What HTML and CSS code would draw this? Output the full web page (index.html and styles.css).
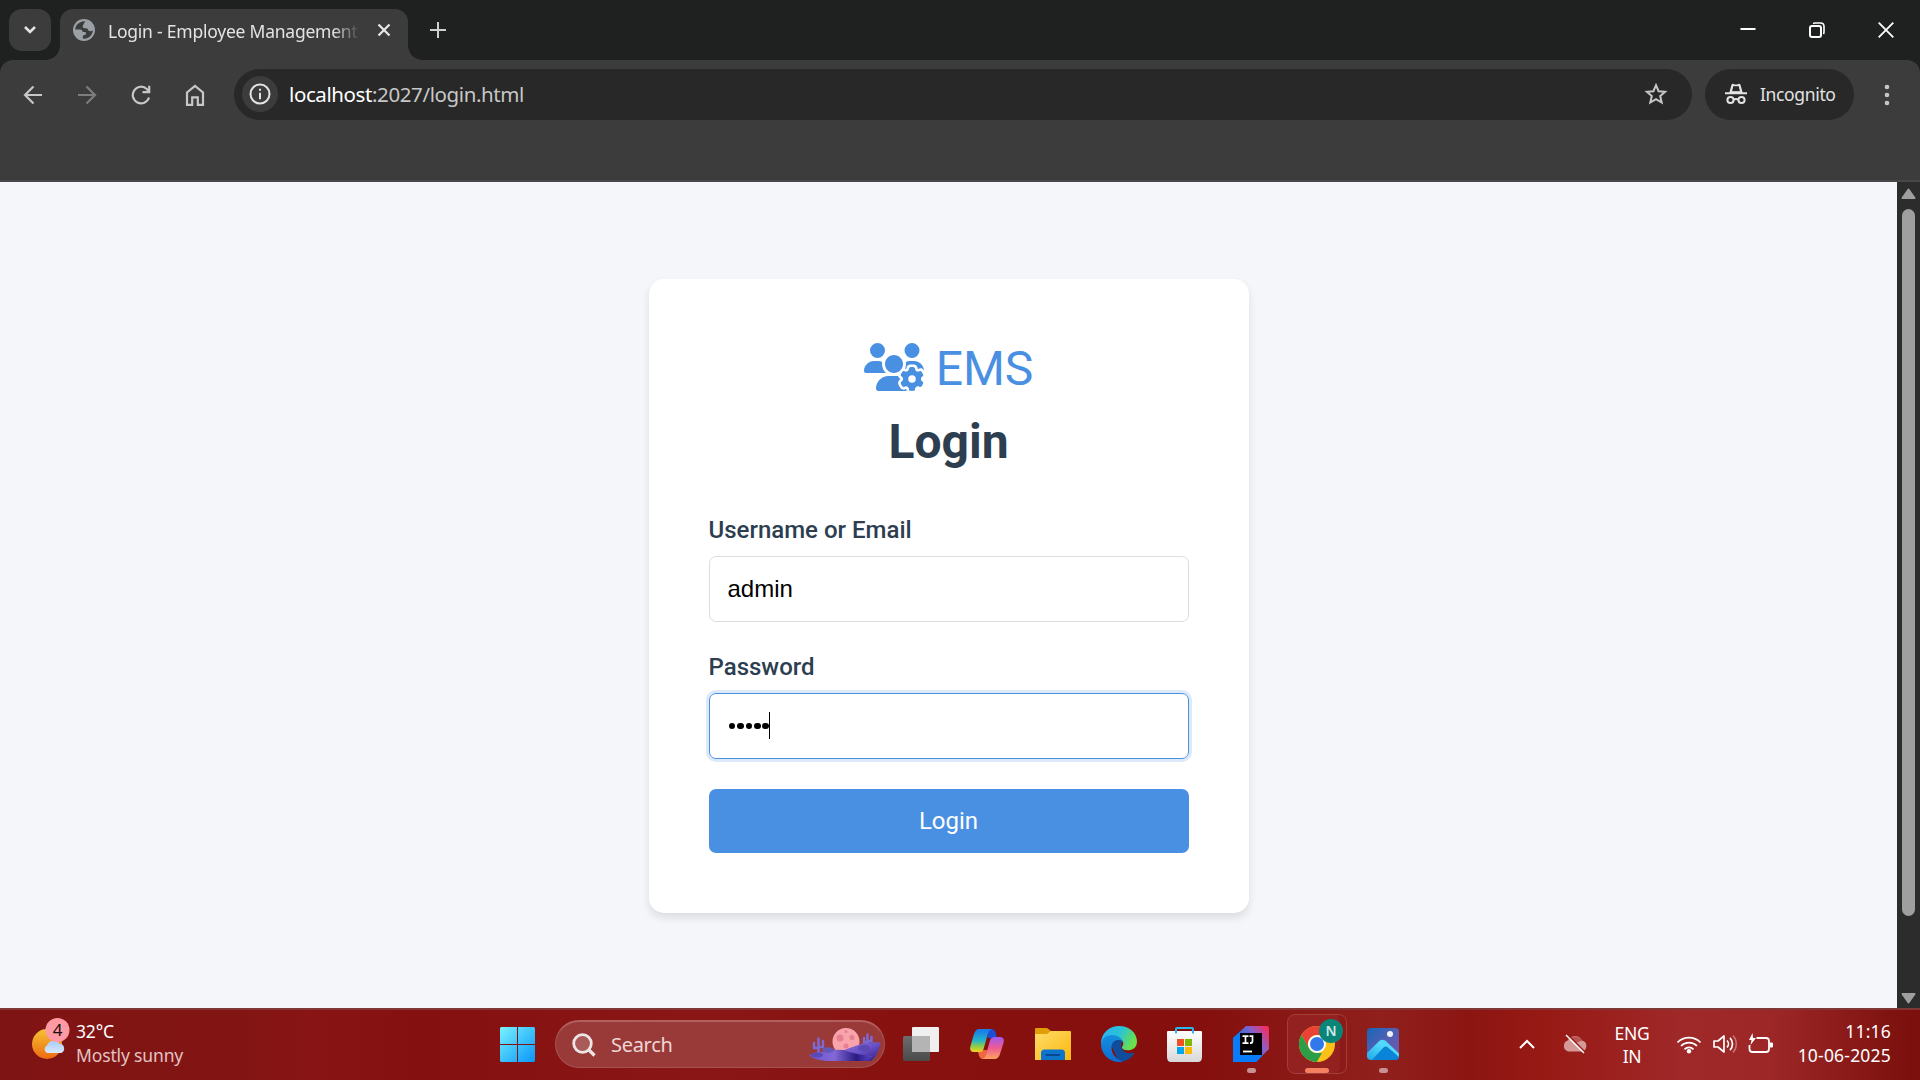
FILE: index.html
```html
<!DOCTYPE html>
<html lang="en">
<head>
<meta charset="utf-8">
<title>Login - Employee Management System</title>
<link rel="stylesheet" href="styles.css">
</head>
<body>
<div class="screen">
  <header class="tabstrip">
    <button class="tab-search" aria-label="Search tabs"><svg width="14" height="10" viewBox="0 0 14 10"><path d="M2 2l5 5 5-5" fill="none" stroke="#e3e3e3" stroke-width="2.6"/></svg></button>
    <div class="tab">
      <svg class="favicon" width="22" height="22" viewBox="0 0 22 22"><circle cx="11" cy="11" r="11" fill="#9aa0a6"/><path d="M12 2.2C7 1.800 2.500 5.500 2.200 10.500h4.800c1.800 0 2.600 1 2.800 2.500h3v2.800c-1.500 0-3 .4-3 2v1.800c5 1 9.800-3 10-8.300-1 .8-2.300 1.200-3.500.8-1.500-.5-1.300-2-2.300-2.600-1-.6-3.500.2-4.200-1.300-.6-1.500 1-2.700 1-3.500 0-1 1.200-1 1.200-2.500z" fill="#3c3c3c"/></svg>
      <span class="tab-title">Login - Employee Management</span>
      <svg class="tab-close" width="14" height="14" viewBox="0 0 14 14"><path d="M1.500 1.500l11 11M12.500 1.500l-11 11" stroke="#e8e8e8" stroke-width="2.200"/></svg>
    </div>
    <svg class="new-tab" width="16" height="16" viewBox="0 0 16 16"><path d="M8 0v16M0 8h16" stroke="#d0d0d0" stroke-width="2"/></svg>
    <div class="window-controls">
      <svg width="16" height="16" viewBox="0 0 16 16"><path d="M0.500 7h15" stroke="#fff" stroke-width="2"/></svg>
      <svg width="16" height="16" viewBox="0 0 16 16"><rect x="1" y="4" width="11" height="11" rx="2" fill="none" stroke="#fff" stroke-width="2"/><path d="M4 1.500Q5 1 6 1h5.500Q15 1 15 4.500V10q0 1-.6 2" fill="none" stroke="#fff" stroke-width="1.600"/></svg>
      <svg width="16" height="16" viewBox="0 0 16 16"><path d="M.7.700l14.600 14.600M15.300.7L.7 15.300" stroke="#fff" stroke-width="1.800"/></svg>
    </div>
  </header>

  <nav class="toolbar">
    <div class="nav-icons">
      <svg width="20" height="20" viewBox="0 0 20 20"><path d="M10.500 1.500L2 10l8.500 8.500M2 10h17" fill="none" stroke="#c7c7c7" stroke-width="2.200"/></svg>
      <svg width="20" height="20" viewBox="0 0 20 20"><path d="M9.500 1.500L18 10l-8.500 8.500M18 10H1" fill="none" stroke="#7d7d7d" stroke-width="2.200"/></svg>
      <svg width="20" height="20" viewBox="0 0 20 20"><path d="M18 12.500A8.300 8.300 0 1 1 15.800 4l2.200 2.600" fill="none" stroke="#c7c7c7" stroke-width="2.200"/><path d="M18.200.8V7.200H11.500" fill="none" stroke="#c7c7c7" stroke-width="2.200"/></svg>
      <svg width="20" height="22" viewBox="0 0 20 22"><path d="M2 20.800V8.500L10 2l8 6.500v12.300h-5.200v-7.500H7.200v7.500z" fill="none" stroke="#c7c7c7" stroke-width="2.200"/></svg>
    </div>
    <div class="omnibox">
      <span class="site-info"><svg width="22" height="22" viewBox="0 0 22 22"><circle cx="11" cy="11" r="9.500" fill="none" stroke="#e3e3e3" stroke-width="2"/><path d="M11 9.800v6.400M11 5.700v2.100" stroke="#e3e3e3" stroke-width="2"/></svg></span>
      <span class="url"><b>localhost</b>:2027/login.html</span>
      <svg class="star" width="24" height="24" viewBox="0 0 24 24"><path d="M12 3.200l2.600 6 6.500.6-4.900 4.300 1.500 6.400-5.700-3.400-5.700 3.400 1.500-6.400-4.900-4.300 6.500-.6z" fill="none" stroke="#c7c7c7" stroke-width="2"/></svg>
    </div>
    <div class="incognito">
      <svg width="22" height="22" viewBox="0 0 22 22"><path d="M0 9.300h22v2H0zM4.300 9.800L6.500 1.700Q7.200.300 8.600.9q2.400 1.100 4.800 0 1.400-.6 2.100.8l2.200 8.100z" fill="#e3e3e3"/><path d="M7 8.500l1.400-5.600q2.600.9 5.200 0L15 8.500z" fill="#282828"/><path d="M6 8.300h10v1.500H6z" fill="#e3e3e3"/><g fill="none" stroke="#e3e3e3" stroke-width="2"><circle cx="5.500" cy="17" r="3.100"/><circle cx="16.500" cy="17" r="3.100"/><path d="M8.500 16.500q2.500-1.200 5 0"/></g></svg>
      <span>Incognito</span>
    </div>
    <svg class="menu" width="6" height="22" viewBox="0 0 6 22"><g fill="#c7c7c7"><circle cx="3" cy="3" r="2.300"/><circle cx="3" cy="11" r="2.300"/><circle cx="3" cy="19" r="2.300"/></g></svg>
  </nav>

  <div class="viewport">
    <main class="page">
      <section class="card">
        <div class="logo">
          <svg width="60" height="48" viewBox="0 0 640 512" fill="#4a90e2"><path d="M144 160A80 80 0 1 0 144 0a80 80 0 1 0 0 160zm368 0A80 80 0 1 0 512 0a80 80 0 1 0 0 160zM0 298.700C0 310.400 9.600 320 21.300 320H234.700c.2 0 .4 0 .7 0c-26.600-23.500-43.300-57.800-43.300-96c0-7.600 .7-15 1.900-22.300c-13.600-6.300-28.700-9.700-44.600-9.700H106.700C47.800 192 0 239.800 0 298.700zM320 320c24 0 45.900-8.800 62.700-23.300c2.500-3.700 5.200-7.300 8-10.700c2.700-3.300 5.700-6.100 9-8.300C410 262.300 416 243.900 416 224c0-53-43-96-96-96s-96 43-96 96s43 96 96 96zm65.400 60.200c-10.300-5.900-18.100-16.200-20.800-28.200H261.300C187.700 352 128 411.700 128 485.300c0 14.700 11.900 26.700 26.700 26.700H455.200c-2.100-5.200-3.200-10.900-3.200-16.400v-3c-1.300-.7-2.700-1.500-4-2.300l-2.600 1.500c-16.800 9.700-40.500 8-54.700-9.700c-4.500-5.600-8.600-11.500-12.400-17.600l-.1-.2-.1-.2-2.400-4.100-.1-.2-.1-.2c-3.400-6.200-6.400-12.600-9-19.300c-8.200-21.200 2.200-42.600 19-52.300l2.700-1.500c0-.8 0-1.500 0-2.300s0-1.500 0-2.300l-2.700-1.500zM533.300 192H490.700c-15.900 0-31 3.500-44.600 9.700c1.300 7.200 1.900 14.700 1.900 22.300c0 17.400-3.500 33.900-9.700 49c2.500 .9 4.900 2 7.100 3.300l2.600 1.500c1.300-.8 2.600-1.600 4-2.300v-3c0-19.400 13.300-39.100 35.800-42.600c7.900-1.200 16-1.900 24.200-1.900s16.300 .6 24.200 1.900c22.500 3.500 35.800 23.200 35.800 42.600v3c1.300 .7 2.700 1.500 4 2.300l2.600-1.500c16.800-9.700 40.500-8 54.700 9.700c2.300 2.800 4.500 5.800 6.600 8.700c-2.100-57.100-49-102.700-106.600-102.700zm91.300 163.900c6.300-3.600 9.500-11.100 6.800-18c-2.100-5.500-4.600-10.800-7.400-15.900l-2.300-4c-3.100-5.100-6.500-9.900-10.200-14.500c-4.600-5.700-12.700-6.700-19-3l-2.900 1.700c-9.200 5.300-20.400 4-29.600-1.300s-16.100-14.500-16.100-25.100v-3.400c0-7.300-4.900-13.800-12.100-14.900c-6.500-1-13.100-1.500-19.900-1.500s-13.400 .5-19.900 1.500c-7.200 1.100-12.100 7.600-12.100 14.900v3.400c0 10.600-6.900 19.800-16.100 25.100s-20.400 6.600-29.600 1.300l-2.900-1.700c-6.300-3.600-14.400-2.600-19 3c-3.700 4.600-7.100 9.500-10.200 14.600l-2.300 3.900c-2.800 5.100-5.300 10.400-7.400 15.900c-2.600 6.800 .5 14.300 6.800 17.900l2.900 1.700c9.200 5.300 13.700 15.800 13.700 26.400s-4.500 21.100-13.700 26.400l-3 1.700c-6.300 3.600-9.500 11.100-6.800 17.900c2.100 5.500 4.600 10.700 7.400 15.800l2.400 4.100c3 5.100 6.400 9.900 10.100 14.500c4.600 5.700 12.700 6.700 19 3l2.900-1.700c9.200-5.300 20.400-4 29.600 1.300s16.100 14.500 16.100 25.100v3.400c0 7.300 4.900 13.800 12.100 14.900c6.500 1 13.100 1.500 19.900 1.500s13.400-.5 19.900-1.500c7.200-1.100 12.100-7.600 12.100-14.900v-3.400c0-10.600 6.900-19.800 16.100-25.100s20.400-6.600 29.600-1.300l2.900 1.700c6.300 3.600 14.400 2.600 19-3c3.700-4.600 7.100-9.400 10.100-14.500l2.400-4.200c2.800-5.100 5.300-10.300 7.400-15.800c2.600-6.800-.5-14.300-6.800-17.900l-3-1.700c-9.200-5.300-13.700-15.800-13.700-26.400s4.500-21.100 13.700-26.400l3-1.700zM472 384a40 40 0 1 1 80 0 40 40 0 1 1 -80 0z"/></svg>
          <span>EMS</span>
        </div>
        <h1>Login</h1>
        <div class="label">Username or Email</div>
        <div class="field">admin</div>
        <div class="label">Password</div>
        <div class="field focused"><i></i><i></i><i></i><i></i><i></i><span class="caret"></span></div>
        <button class="submit">Login</button>
      </section>
    </main>
    <div class="scrollbar">
      <svg width="15" height="11" viewBox="0 0 15 11"><path d="M7.500 1.500L13.500 10h-12z" fill="#9f9f9f" stroke="#9f9f9f" stroke-width="2" stroke-linejoin="round"/></svg>
      <div class="thumb"></div>
      <svg width="15" height="11" viewBox="0 0 15 11"><path d="M7.500 9.500L1.500 1h12z" fill="#9f9f9f" stroke="#9f9f9f" stroke-width="2" stroke-linejoin="round"/></svg>
    </div>
  </div>

  <footer class="taskbar">
    <div class="weather">
      <svg width="40" height="46" viewBox="0 0 40 46">
        <defs><linearGradient id="sun" x1="0" y1="0" x2="0" y2="1"><stop offset="0" stop-color="#f3c331"/><stop offset="1" stop-color="#ef6a12"/></linearGradient><linearGradient id="cl" x1="0" y1="0" x2="0" y2="1"><stop offset="0" stop-color="#a9ccf7"/><stop offset="1" stop-color="#d8e8fd"/></linearGradient></defs>
        <circle cx="16" cy="27" r="15" fill="url(#sun)"/><path d="M16.500 36a4 4 0 0 1-.5-7.500 7 7 0 0 1 12.500-1.800A4.800 4.800 0 0 1 30 36z" fill="url(#cl)"/><circle cx="26.500" cy="13" r="12" fill="#ff99a4"/><text x="26.500" y="19" text-anchor="middle" class="badge-num">4</text>
      </svg>
      <div class="weather-text"><span>32°C</span><span class="dim">Mostly sunny</span></div>
    </div>
    <div class="app start"><svg width="35" height="35" viewBox="0 0 35 35"><defs><linearGradient id="win" x1="0" y1="0" x2="1" y2="1"><stop offset="0" stop-color="#7af2ff"/><stop offset=".5" stop-color="#3fc4fb"/><stop offset="1" stop-color="#0a95fa"/></linearGradient></defs><path d="M1 0h16v17H0V1zM18 0h16l1 1v16H18zM0 18h17v17H1l-1-1zM18 18h17v16l-1 1H18z" fill="url(#win)"/></svg></div>
    <div class="search">
      <svg width="24" height="24" viewBox="0 0 24 24"><circle cx="10.500" cy="10.500" r="8.800" fill="#a95a59" stroke="#eee6e6" stroke-width="2.800"/><path d="M17 17l5.500 5.500" stroke="#eee6e6" stroke-width="3.200"/></svg>
      <span>Search</span>
      <svg class="desert" width="72" height="34" viewBox="0 0 72 34">
        <defs><linearGradient id="dune" x1="0" y1="0" x2="1" y2="1"><stop offset="0" stop-color="#9375dc"/><stop offset=".5" stop-color="#6c52c8"/><stop offset="1" stop-color="#2c1c85"/></linearGradient><linearGradient id="dune2" x1="0" y1="0" x2="1" y2="0"><stop offset="0" stop-color="#6a54cc"/><stop offset=".4" stop-color="#8468d8"/><stop offset=".75" stop-color="#2b1b80"/><stop offset="1" stop-color="#5a45c8"/></linearGradient></defs>
        <circle cx="37" cy="13.500" r="13.500" fill="#f9a3ad"/><g fill="#e5808f"><circle cx="31" cy="10" r="3.500"/><circle cx="43" cy="9.500" r="2.500"/><circle cx="37" cy="3.500" r="1.500"/><circle cx="37" cy="18" r="2.500"/></g>
        <g fill="none" stroke="#7a6ad8" stroke-width="2.400" stroke-linecap="round"><path d="M9.500 24V10.500M9.500 20H5v-5M9.500 19h4.500v-6"/><path d="M58.500 19V6.500M58.500 14H55v-4M58.500 13h4V9"/></g>
        <path d="M30 24Q45 18 54 15.500q9-2 17.500-1-1 10-9 18.500H40z" fill="url(#dune)"/><path d="M0 27.500q5-4 14-3.500 8-3 20-2 14 5 29 6-3 3-8 5H18Q6 32 0 27.500z" fill="url(#dune2)"/><ellipse cx="19" cy="22" rx="6" ry="2.800" fill="#6658b8"/><ellipse cx="55" cy="20" rx="6" ry="3" fill="#5a48b5"/><ellipse cx="8" cy="27" rx="6" ry="2.500" fill="#5a48b5"/>
      </svg>
    </div>
    <div class="app"><svg width="36" height="36" viewBox="0 0 36 36"><defs><linearGradient id="tv" x1="0" y1="0" x2="0" y2="1"><stop offset="0" stop-color="#6d6d6d"/><stop offset="1" stop-color="#4a4a4a"/></linearGradient></defs><rect x="9" y="1" width="27" height="25" rx="1" fill="#efefef"/><rect x="0" y="10" width="27" height="25" rx="1.500" fill="url(#tv)"/><path d="M9 10h17q1 0 1 1v15H9z" fill="#b4b4b4"/></svg></div>
    <div class="app"><svg width="34" height="32" viewBox="0 0 34 32"><defs><linearGradient id="c1" x1="0" y1="0" x2="0" y2="1"><stop offset=".1" stop-color="#1a80e8"/><stop offset=".5" stop-color="#25b5c8"/><stop offset=".75" stop-color="#8ccb4b"/><stop offset="1" stop-color="#f2d51c"/></linearGradient><linearGradient id="c2" x1="0" y1="0" x2="0" y2="1"><stop offset="0" stop-color="#9e58f0"/><stop offset=".5" stop-color="#ee5b92"/><stop offset="1" stop-color="#ffa35e"/></linearGradient></defs><path d="M17 1h4.500q3 0 4 3.500L27 10h-9z" fill="#1b4fd8"/><path d="M16 31h-3q-3 0-4-3.500L7.500 22H17z" fill="#f0663e"/><path d="M9.500 1H22q-3 .5-4 4.500l-4 14Q13 24 9.500 24H4q-5 0-3.500-6L4 6Q5.500 1 9.500 1z" fill="url(#c1)"/><path d="M24.500 31H12q3-.5 4-4.500l4-14Q21 9 24.500 9H30q5 0 3.500 6L30 26q-1.500 5-5.500 5z" fill="url(#c2)"/></svg></div>
    <div class="app"><svg width="36" height="34" viewBox="0 0 36 34"><defs><linearGradient id="fo" x1="0" y1="0" x2="1" y2="1"><stop offset="0" stop-color="#ffdc6b"/><stop offset="1" stop-color="#fbb80d"/></linearGradient></defs><path d="M0 8V2q0-1 1-1h11l4 3v5z" fill="#e09f06"/><path d="M0 33V7h12l4-3h19q1 0 1 1v28z" fill="url(#fo)"/><path d="M6 33V26q0-3.500 3.500-3.500h17Q30 22.500 30 26v7z" fill="#0d74cc"/><path d="M10.500 28h14.500" stroke="#07488f" stroke-width="2"/></svg></div>
    <div class="app"><svg width="36" height="36" viewBox="0 0 36 36"><defs><linearGradient id="e1" x1="0" y1="0" x2="1" y2=".4"><stop offset="0" stop-color="#2aaef5"/><stop offset=".55" stop-color="#29c3d6"/><stop offset="1" stop-color="#69e04c"/></linearGradient><linearGradient id="e2" x1="0" y1="0" x2="0" y2="1"><stop offset="0" stop-color="#1590df"/><stop offset="1" stop-color="#0b6bd2"/></linearGradient></defs><path d="M10.500 20C10 12 15 10 22 13q-1.500 1-1 3-1 1.500-1 3c0 5 4 8.300 9 8.300q2.500 0 4.500-.8C31 32 25 36 18 36z" fill="#0f4d9c"/><path d="M0 18C0 7 8 0 18 0c11 0 18 7.500 18 15.500 0 6-4.500 8.800-9 8.800-4.200 0-6.500-1.800-6-3.300.5-1 1.300-1.900 1.300-3.600 0-2.400-2-4-5-4z" fill="url(#e1)"/><path d="M0 18C.5 12 6 9 11 9c7 0 11.300 4.500 11.300 8.500 0-2-1.900-3.900-4.500-3.900-4.800 0-7.300 4-7.300 8.500 0 6 4.500 11 11 13.400Q20 36 18 36C8 36 0 28 0 18z" fill="url(#e2)"/></svg></div>
    <div class="app"><svg width="36" height="36" viewBox="0 0 36 36"><defs><linearGradient id="st" x1="0" y1="0" x2="0" y2="1"><stop offset="0" stop-color="#fff"/><stop offset="1" stop-color="#d8d8d8"/></linearGradient></defs><path d="M9 7V3q0-1 1-1h15q1 0 1 1v4" fill="none" stroke="#28b8f0" stroke-width="2"/><path d="M1 5h33q1 0 1 1v25q0 5-4 5H4q-4 0-4-5V6q0-1 1-1z" fill="url(#st)"/><path d="M9 5v2.500M26 5v2.500" stroke="#28b8f0" stroke-width="2"/><path fill="#f25022" d="M10 13h7v7h-7z"/><path fill="#7fba00" d="M18 13h7v7h-7z"/><path fill="#00a4ef" d="M10 21h7v7h-7z"/><path fill="#ffb900" d="M18 21h7v7h-7z"/></svg></div>
    <div class="app open"><svg width="36" height="36" viewBox="0 0 36 36"><defs><linearGradient id="ij" x1=".25" y1=".45" x2=".95" y2="0"><stop offset="0" stop-color="#1a74ee"/><stop offset=".5" stop-color="#8b5fc7"/><stop offset="1" stop-color="#fe2857"/></linearGradient></defs><path d="M13 0h21q2 0 2 2v21L23 36H0V12z" fill="url(#ij)"/><path d="M0 12l7-6v30H0zM7 29h22v1l-6 6H7z" fill="#087cfa"/><path d="M7 7h22v22H7z"/><path d="M9.500 10.200h6M12.500 10.200v7M9.500 17.200h6M16.500 10.200h3v5q0 2-2.500 2" fill="none" stroke="#fff" stroke-width="1.700"/><path d="M10 25.500h9" stroke="#fff" stroke-width="1.800"/></svg></div>
    <div class="app active"><div class="tile"><svg width="46" height="50" viewBox="0 0 46 50"><circle cx="20" cy="25" r="18" fill="#fbc116"/><path d="M4.400 16A18 18 0 0 1 35.600 16H20a9 9 0 0 0-7.800 13.500z" fill="#ea4335"/><path d="M4.400 16l7.800 13.500Q15 34 20 34h5l-5.200 9A18 18 0 0 1 4.400 16z" fill="#2d9d48"/><circle cx="20" cy="25" r="9" fill="#fff"/><circle cx="20" cy="25" r="7" fill="#3178ea"/><circle cx="34" cy="12" r="12" fill="#0b8577"/><text x="34" y="17" text-anchor="middle" class="profile">N</text></svg></div></div>
    <div class="app open"><svg width="32" height="32" viewBox="0 0 32 32"><defs><linearGradient id="ph" x1="0" y1="0" x2="1" y2="1"><stop offset="0" stop-color="#1666b8"/><stop offset=".5" stop-color="#5460b4"/><stop offset="1" stop-color="#7a50a8"/></linearGradient><linearGradient id="mt" x1="0" y1="1" x2="1" y2="0"><stop offset="0" stop-color="#22a9e8"/><stop offset=".6" stop-color="#52d9fa"/></linearGradient></defs><rect width="32" height="32" rx="4" fill="url(#ph)"/><path d="M4 32L18.500 15 32 26v2q0 4-4 4z" fill="#0a84d8"/><path d="M0 25L12.500 12.800Q15.500 10.500 18.500 12.800L32 25.500V29L21 19.500q-2.500-2-5 .5L5 31.800Q0 32 0 28z" fill="url(#mt)"/><circle cx="23" cy="6" r="3" fill="#eef3fb"/></svg></div>
    <div class="tray">
      <svg class="chev" width="16" height="10" viewBox="0 0 16 10"><path d="M1 9l7-7 7 7" fill="none" stroke="#fff" stroke-width="2"/></svg>
      <svg class="cloud" width="26" height="20" viewBox="0 0 26 20"><path d="M6 17.500A5.800 5.800 0 0 1 5.800 6.500 8 8 0 0 1 20 6.500a5.600 5.600 0 0 1-.5 11z" fill="#d59a98"/><path d="M9 4a8 8 0 0 1 11 2.500l-7 3z" fill="#b85552"/><path d="M5.500.5l17.500 17.500" stroke="#951b18" stroke-width="1.600"/><path d="M4 1l18 18" stroke="#fff" stroke-width="1.400"/></svg>
      <div class="lang"><span>ENG</span><span>IN</span></div>
      <svg class="wifi" width="26" height="20" viewBox="0 0 26 20"><g fill="none" stroke="#fff" stroke-width="1.700"><path d="M1.500 8.500a16.200 16.200 0 0 1 23 0"/><path d="M5 12a11.300 11.300 0 0 1 16 0"/><path d="M8.500 15.300a6.400 6.400 0 0 1 9 0"/></g><circle cx="13" cy="17.200" r="2.200" fill="#fff"/></svg>
      <svg class="vol" width="26" height="20" viewBox="0 0 26 20"><path d="M1 7h4l6-5v16l-6-5H1z" fill="none" stroke="#fff" stroke-width="1.700" stroke-linejoin="round"/><path d="M14 6.500a5 5 0 0 1 0 7M17 3.800a9 9 0 0 1 0 12.400" fill="none" stroke="#fff" stroke-width="1.700"/><path d="M20 1.500a12.500 12.500 0 0 1 0 17" fill="none" stroke="#c87272" stroke-width="1.500"/></svg>
      <svg class="bat" width="26" height="22" viewBox="0 0 26 22"><path d="M8.500 5H18q3 0 3 3v8q0 3-3 3H4.500Q1.500 19 1.500 16v-4" fill="none" stroke="#fff" stroke-width="1.800"/><path d="M22 9.500h2q1 0 1 1v3q0 1-1 1h-2z" fill="#fff"/><path d="M4.500 0L1 7h2.500L2.500 12 8 5H5z" fill="#fff"/></svg>
      <div class="clock"><span>11:16</span><span>10-06-2025</span></div>
    </div>
  </footer>
</div>
</body>
</html>
```
FILE: styles.css
```css
* { box-sizing: border-box; }
body { margin: 0; font-family: "Noto Sans", "Open Sans", sans-serif; }
svg { display: block; flex: none; }
button { border: 0; padding: 0; }
.screen { width: 1920px; height: 1080px; display: flex; flex-direction: column; overflow: hidden; background: #1f2120; }

.tabstrip { height: 60px; padding: 9px 16px 0 9px; display: flex; align-items: flex-start; }
.tab-search { width: 42px; height: 42px; border-radius: 13px; background: #3c3c3c; display: grid; place-items: center; }
.tab { position: relative; width: 348px; height: 51px; margin-left: 9px; padding: 0 17px 9px 13px; border-radius: 13px 13px 0 0; background: #3c3c3c; display: flex; align-items: center; }
.tab::before, .tab::after { content: ""; position: absolute; bottom: 0; width: 14px; height: 14px; }
.tab::before { left: -14px; background: radial-gradient(circle at 0 0, transparent 13.5px, #3c3c3c 14px); }
.tab::after { right: -14px; background: radial-gradient(circle at 100% 0, transparent 13.5px, #3c3c3c 14px); }
.tab-title { margin: 2px 0 0 13px; width: 250px; overflow: hidden; white-space: nowrap; font-size: 17.500px; letter-spacing: -0.23px; line-height: 26px; color: #e3e3e3; -webkit-mask-image: linear-gradient(90deg, #000 225px, transparent 252px); mask-image: linear-gradient(90deg, #000 225px, transparent 252px); }
.tab-close { margin-left: auto; }
.new-tab { margin: 13px 0 0 22px; }
.window-controls { margin: 13px 10px 0 auto; display: flex; gap: 53px; }

.toolbar { height: 122px; padding: 9px 30px 0 23px; border-bottom: 2px solid #484848; border-radius: 13px 13px 0 0; background: #3c3c3c; display: flex; align-items: flex-start; }
.nav-icons { height: 51px; display: flex; align-items: center; gap: 34px; }
.omnibox { width: 1458px; height: 51px; margin-left: 29px; padding: 0 24px 2px 8px; border-radius: 26px; background: #282828; display: flex; align-items: center; }
.site-info { width: 36px; height: 36px; border-radius: 50%; background: #3c3c3c; display: grid; place-items: center; }
.url { margin-left: 11px; font-size: 20.500px; letter-spacing: -0.4px; color: #c7c7c7; line-height: 30px; }
.url b { font-weight: 400; color: #fff; }
.star { margin-left: auto; }
.incognito { width: 149px; height: 51px; margin-left: 13px; padding: 0 0 2px 20px; border-radius: 26px; background: #282828; display: flex; align-items: center; gap: 13px; font-size: 17.500px; letter-spacing: -0.35px; color: #e3e3e3; }
.menu { margin: 15px 0 0 auto; }

.viewport { height: 826px; display: flex; }
.page { flex: 1; background: #f4f6fa; padding-top: 97px; display: flex; justify-content: center; align-items: flex-start; color: #2c3e50; font-family: Roboto, sans-serif; }
.card { width: 600px; height: 634px; padding: 60px; border-radius: 15px; background: #fff; box-shadow: 0 5px 8px rgba(0, 0, 0, .1); }
.logo { height: 58px; display: flex; align-items: center; justify-content: center; gap: 12px; color: #4a90e2; font-size: 48px; line-height: 58px; }
.logo svg { margin-bottom: 2px; }
.logo span { margin-top: 2px; }
h1 { margin: 16px 0 0; font-size: 48px; line-height: 58px; font-weight: 700; text-align: center; }
.label { margin-top: 45px; font-size: 24px; line-height: 28px; font-weight: 500; }
.field + .label { margin-top: 31px; }
.field { height: 66px; margin-top: 12px; padding: 0 18px; border: 1px solid #ddd; border-radius: 7px; display: flex; align-items: center; color: #000; font-family: "Liberation Sans", Arial, sans-serif; font-size: 24px; }
.focused { padding-bottom: 2px; border-color: #4a90e2; box-shadow: 0 0 0 3px rgba(74, 144, 226, .2); }
.focused i { width: 6.600px; height: 6.600px; margin: 2px .5px 0 1.3px; border-radius: 50%; background: #000; }
.caret { width: 1px; height: 27px; background: #000; }
.submit { display: block; width: 480px; height: 64px; margin-top: 30px; border-radius: 7px; background: #4a90e2; color: #fff; font: 400 24px Roboto, sans-serif; }
.scrollbar { width: 23px; padding: 6px 0 4px; background: #2c2c2c; display: flex; flex-direction: column; align-items: center; }
.thumb { width: 13px; height: 707px; margin: 10px 0 auto; border-radius: 7px; background: #9f9f9f; }

.taskbar { height: 72px; padding-bottom: 2px; border-top: 2px solid #803736; background: linear-gradient(90deg, #7f1414 0, #821513 240px, #891415 310px, #84110f 420px, #8a1716 700px, #87110f 900px, #840f0d 1200px, #90201c 1380px, #8c1512 1470px, #971914 1540px, #9f2828 1680px, #9d2727 1770px, #7b100d 1910px); display: flex; align-items: center; color: #fff; font-size: 17.500px; }
.weather { width: 484px; padding-left: 31px; display: flex; align-items: center; gap: 5px; }
.weather svg { margin-top: -8px; }
.badge-num { font-size: 17px; fill: #1c1010; }
.weather-text { margin-top: -2px; display: flex; flex-direction: column; line-height: 24px; letter-spacing: -0.15px; }
.dim { color: #e2c4c4; }
.app { position: relative; width: 66px; height: 68px; display: grid; place-items: center; }
.app.open::after, .app.active::after { content: ""; position: absolute; left: 29px; bottom: 5px; width: 9px; height: 5px; border-radius: 3px; background: #c99292; }
.app.active::after { left: 21px; width: 24px; background: #f5805f; }
.search { width: 330px; height: 48px; margin: 0 3px 0 5px; padding: 0 3px 0 16px; border: 1px solid #a65352; border-top: 2px solid #b0605f; border-radius: 24px; background: #993a39; display: flex; align-items: center; color: #edd6d6; font-size: 20px; letter-spacing: -0.3px; }
.search span { margin-left: 15px; }
.desert { margin-left: auto; }
.tile { width: 60px; height: 60px; border: 1px solid #a03f3c; border-radius: 8px; background: #93211f; box-shadow: inset -7px 0 0 -1px #8b1a18; display: flex; padding: 4px 0 0 9px; }
.profile { font-size: 14px; font-weight: 600; fill: #cfeae6; }
.tray { margin-left: auto; padding-right: 29px; display: flex; align-items: center; }
.cloud { margin-left: 27px; }
.lang { width: 40px; margin: 2px 0 0 24px; display: flex; flex-direction: column; align-items: center; line-height: 23px; letter-spacing: -0.3px; }
.wifi { margin-left: 24px; }
.vol { margin-left: 11px; }
.bat { margin-left: 9px; }
.clock { width: 117px; margin-top: -2px; display: flex; flex-direction: column; align-items: flex-end; line-height: 24px; letter-spacing: 0.2px; }
```
